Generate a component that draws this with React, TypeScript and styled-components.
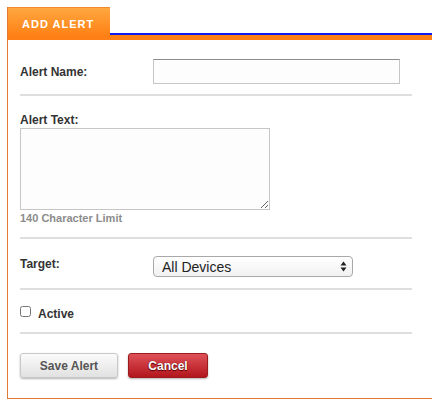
import styled, { createGlobalStyle } from "styled-components"

const GlobalStyle = createGlobalStyle`
  body {
    margin: 0;
    background: #fff;
    font-family: "Liberation Sans", Arial, Helvetica, sans-serif;
  }
`

const Panel = styled.div`
  margin: 7px 0 0 7px;
  border-left: 1px solid #e27a33;
  border-bottom: 1px solid #e27a33;
`
const Header = styled.div`
  display: flex;
  height: 28px;
`
const Tab = styled.div`
  width: 102px;
  height: 28px;
  box-sizing: border-box;
  padding: 10px 0 0 14px;
  border-top: 1px solid #f08a2c;
  background: linear-gradient(#ffa740, #ff8216);
  color: #fff;
  font-size: 11px;
  line-height: 12px;
  font-weight: bold;
  letter-spacing: 1px;
  text-transform: uppercase;
  white-space: nowrap;
`
const TabFiller = styled.div`
  flex: 1;
  border-bottom: 2px solid #0a1cf0;
`
const Band = styled.div`
  height: 5px;
  background: #ff7f17;
`
const Body = styled.div`
  padding: 0 20px 0 12px;
`
const Section = styled.div<{ $top: number; $bottom: number }>`
  padding: ${(p) => p.$top}px 0 ${(p) => p.$bottom}px;
`
const Divider = styled.div`
  height: 2px;
  background: #dedede;
`
const FieldRow = styled.div<{ $center?: boolean }>`
  display: grid;
  grid-template-columns: 133px 1fr;
  align-items: ${(p) => (p.$center ? "center" : "start")};
`
const Label = styled.label`
  display: block;
  color: #333;
  font-size: 12px;
  line-height: 16px;
  font-weight: bold;
`
const StackLabel = styled(Label)`
  line-height: 14px;
  margin-bottom: 1px;
`
const TextInput = styled.input`
  display: block;
  width: 247px;
  height: 25px;
  box-sizing: border-box;
  margin: 0;
  border: 1px solid #c6c6c6;
  border-top-color: #8c8c8c;
  background: #fdfdfd;
  font: 13px "Liberation Sans", Arial, sans-serif;
  outline: none;
`
const TextArea = styled.textarea`
  display: block;
  width: 250px;
  height: 82px;
  box-sizing: border-box;
  margin: 0;
  border: 1px solid #c6c6c6;
  background: #fdfdfd;
  font: 13px "Liberation Sans", Arial, sans-serif;
  outline: none;
`
const Hint = styled.div`
  margin-top: 2px;
  color: #8c8c8c;
  font-size: 11px;
  line-height: 13px;
  font-weight: bold;
`
const SelectWrap = styled.div`
  position: relative;
  width: 200px;
  height: 21px;
`
const Select = styled.select`
  appearance: none;
  display: block;
  width: 100%;
  height: 100%;
  box-sizing: border-box;
  margin: 0;
  padding: 0 0 0 8px;
  border: 1px solid #a9a9a9;
  border-radius: 4px;
  background: linear-gradient(#ffffff, #f1f1f1);
  color: #222;
  font: 14px "Liberation Sans", Arial, sans-serif;
  outline: none;
`
const Arrows = styled.svg`
  position: absolute;
  right: 6px;
  top: 5px;
  pointer-events: none;
`
const CheckRow = styled.div`
  display: flex;
  align-items: flex-start;
`
const Check = styled.input`
  width: 11px;
  height: 11px;
  margin: 0 7px 0 0;
`
const Buttons = styled.div`
  display: flex;
  gap: 10px;
`
const Button = styled.button<{ $danger?: boolean }>`
  width: ${(p) => (p.$danger ? 80 : 98)}px;
  height: 25px;
  box-sizing: border-box;
  border-radius: 3px;
  font: bold 12px "Liberation Sans", Arial, sans-serif;
  border: 1px solid ${(p) => (p.$danger ? "#9c1b1f" : "#c9c9c9")};
  background: ${(p) =>
    p.$danger
      ? "linear-gradient(#de5158, #b3161d)"
      : "linear-gradient(#fbfbfb, #e1e1e1)"};
  color: ${(p) => (p.$danger ? "#fff" : "#555")};
  text-shadow: ${(p) => (p.$danger ? "0 0 1px #5a0000, 0 1px 1px #5a0000" : "none")};
  box-shadow: 0 1px 2px rgba(0, 0, 0, 0.3);
`

export default function App() {
  return (
    <>
      <GlobalStyle />
      <Panel>
        <Header>
          <Tab>Add Alert</Tab>
          <TabFiller />
        </Header>
        <Band />
        <Body>
          <Section $top={19} $bottom={10}>
            <FieldRow $center>
              <Label>Alert Name:</Label>
              <TextInput type="text" />
            </FieldRow>
          </Section>
          <Divider />
          <Section $top={17} $bottom={12}>
            <StackLabel>Alert Text:</StackLabel>
            <TextArea />
            <Hint>140 Character Limit</Hint>
          </Section>
          <Divider />
          <Section $top={17} $bottom={11}>
            <FieldRow>
              <Label>Target:</Label>
              <SelectWrap>
                <Select defaultValue="all">
                  <option value="all">All Devices</option>
                </Select>
                <Arrows width="7" height="11" viewBox="0 0 7 11">
                  <path d="M3.5 0.5 L6.5 4.5 L0.5 4.5 Z" fill="#222" />
                  <path d="M3.5 10.5 L6.5 6.5 L0.5 6.5 Z" fill="#222" />
                </Arrows>
              </SelectWrap>
            </FieldRow>
          </Section>
          <Divider />
          <Section $top={16} $bottom={10}>
            <CheckRow>
              <Check type="checkbox" id="active" />
              <Label htmlFor="active">Active</Label>
            </CheckRow>
          </Section>
          <Divider />
          <Section $top={19} $bottom={20}>
            <Buttons>
              <Button>Save Alert</Button>
              <Button $danger>Cancel</Button>
            </Buttons>
          </Section>
        </Body>
      </Panel>
    </>
  )
}
